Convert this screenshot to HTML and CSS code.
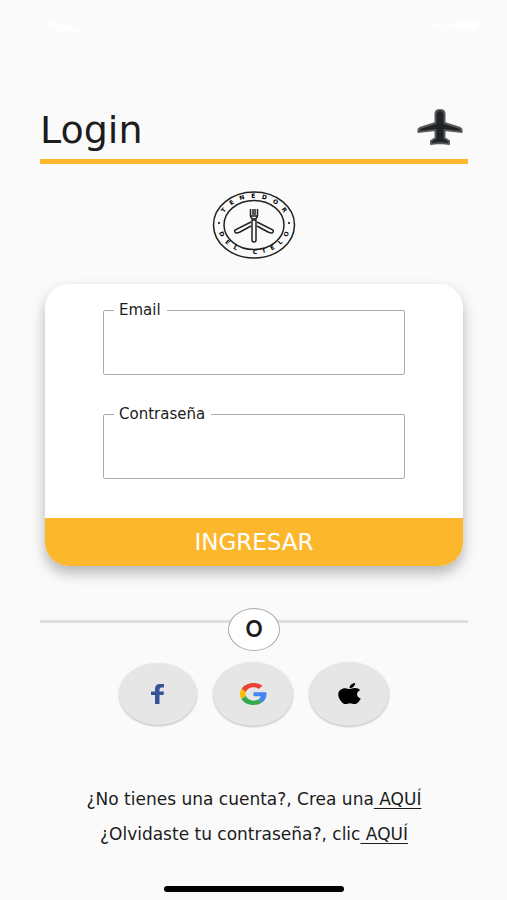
FILE: index.html
```html
<!DOCTYPE html>
<html lang="es">
<head>
    <meta charset="UTF-8">
    <meta name="viewport" content="width=device-width, initial-scale=1.0">
    <title>Tenedor del Cielo - Login</title>
    <link rel="stylesheet" href="styles.css">
</head>
<body>
    <!-- Status bar, white on the light background -->
    <div class="status-bar">
        <svg width="40" height="18" viewBox="0 0 40 18" aria-hidden="true">
            <path d="M3 6L14 11L30 13" fill="none" stroke="#fff" stroke-width="5" stroke-linecap="round"/>
        </svg>
        <svg width="58" height="18" viewBox="0 0 58 18" aria-hidden="true">
            <path d="M2 5h16l-8 9zM20 7h12v5H20z" fill="#fdfdfd"/>
            <rect x="32" y="4" width="24" height="10" rx="4" fill="#fff"/>
        </svg>
    </div>

    <header>
        <h1>Login</h1>
        <svg class="plane" viewBox="0 0 46 38" aria-hidden="true">
            <path d="M18.500 6Q18.500 2 23 2T27.500 6V15L43 20Q45 21 44.500 24L27.500 22V30L32 33V36L23 35L14 36V33L18.500 30V22L1.500 24Q1 21 3 20L18.500 15Z"/>
        </svg>
    </header>

    <main>
        <svg class="logo" viewBox="0 0 84 68" role="img" aria-label="Tenedor del Cielo">
            <defs>
                <path id="arc-top" d="M8.500 34A33.500 27 0 0 1 75.500 34"/>
                <path id="arc-bottom" d="M5 32A37 31 0 0 0 79 32"/>
            </defs>
            <ellipse cx="42" cy="34" rx="40.5" ry="33" class="ring"/>
            <ellipse cx="42" cy="34" rx="30" ry="24.5" class="ring"/>
            <text class="logo-text"><textPath href="#arc-top" startOffset="50%">T   E   N   E   D   O   R</textPath></text>
            <text class="logo-text"><textPath href="#arc-bottom" startOffset="50%">D   E   L        C   I   E   L   O</textPath></text>
            <circle cx="7" cy="32" r="1"/>
            <circle cx="77" cy="32" r="1"/>
            <path class="fork" d="M38.500 18V25Q39 28 42 28T45.500 25V18M41 18V24M43 18V24M39 25H45"/>
            <path class="fork" d="M40 29H44V49Q44 51 42 51T40 49Z"/>
            <path class="fork" d="M39 31L23 39Q22 41 24 42Q26 42 28 41L39 35M45 31L61 39Q62 41 60 42Q58 42 56 41L45 35"/>
        </svg>

        <form class="card">
            <div class="fields">
                <div class="form-group">
                    <label for="email">Email</label>
                    <input type="email" id="email" name="email">
                </div>
                <div class="form-group">
                    <label for="password">Contraseña</label>
                    <input type="password" id="password" name="password">
                </div>
            </div>
            <button type="submit" class="btn">INGRESAR</button>
        </form>

        <div class="divider"><span>O</span></div>

        <div class="social">
            <button type="button" class="social-btn social-small" aria-label="Facebook">
                <svg width="14" height="20" viewBox="0 0 14 20" aria-hidden="true">
                    <path fill="#36539b" d="M4 20V11H0V7.500H4V5Q4 0 9 0H13V3.500H10.500Q8.500 3.500 8.500 5.500V7.500H13L12.500 11H8.500V20Z"/>
                </svg>
            </button>
            <button type="button" class="social-btn" aria-label="Google">
                <svg width="27" height="22" viewBox="0 0 48 48" preserveAspectRatio="none" aria-hidden="true">
                    <path fill="#ea4335" d="M24 9.500c3.540 0 6.710 1.220 9.210 3.600l6.850-6.850C35.900 2.380 30.470 0 24 0 14.620 0 6.510 5.380 2.560 13.220l7.980 6.190C12.430 13.720 17.740 9.500 24 9.500z"/>
                    <path fill="#4285f4" d="M46.980 24.550c0-1.570-.15-3.090-.38-4.550H24v9.020h12.940c-.58 2.960-2.260 5.480-4.780 7.180l7.730 6c4.510-4.180 7.090-10.360 7.090-17.650z"/>
                    <path fill="#fbbc05" d="M10.530 28.590c-.48-1.450-.76-2.990-.76-4.590s.27-3.140.76-4.590l-7.980-6.190C.92 16.460 0 20.120 0 24c0 3.880.92 7.540 2.560 10.780l7.970-6.190z"/>
                    <path fill="#34a853" d="M24 48c6.480 0 11.930-2.130 15.890-5.810l-7.730-6c-2.150 1.450-4.920 2.300-8.160 2.300-6.260 0-11.570-4.220-13.470-9.910l-7.980 6.190C6.510 42.620 14.620 48 24 48z"/>
                </svg>
            </button>
            <button type="button" class="social-btn" aria-label="Apple">
                <svg width="23" height="22" viewBox="0 0 384 470" preserveAspectRatio="none" aria-hidden="true">
                    <path d="M318.700 238.700c-.2-36.700 16.400-64.400 50-84.800-18.800-26.900-47.200-41.700-84.700-44.600-35.500-2.800-74.300 20.700-88.500 20.700-15 0-49.400-19.700-76.400-19.700C63.300 111.200 4 154.800 4 243.500q0 39.300 14.400 81.200c12.800 36.700 59 126.700 107.200 125.200 25.200-.6 43-17.900 75.800-17.900 31.800 0 48.300 17.900 76.400 17.900 48.600-.7 90.400-82.500 102.600-119.300-65.200-30.700-61.700-90-61.700-91.900zM262.100 74.500c27.300-32.400 24.800-61.900 24-72.500-24.100 1.400-52 16.400-67.900 34.900-17.500 19.800-27.800 44.300-25.600 71.900 26.100 2 49.900-11.400 69.500-34.300z"/>
                </svg>
            </button>
        </div>
    </main>

    <footer>
        <p>¿No tienes una cuenta?, Crea una<a href="#registro"> AQUÍ</a></p>
        <p>¿Olvidaste tu contraseña?, clic<a href="#recuperar"> AQUÍ</a></p>
        <div class="home-bar"></div>
    </footer>
</body>
</html>
```
FILE: styles.css
```css
* {
    box-sizing: border-box;
}

body {
    font-family: "DejaVu Sans", Verdana, sans-serif;
    margin: 0;
    padding: 0 39px 0 40px;
    min-height: 100vh;
    background-color: #fafafa;
    color: #1c1c1c;
    display: flex;
    flex-direction: column;
}

.status-bar {
    display: flex;
    justify-content: space-between;
    padding: 17px 0 0 8px;
    margin-right: -13px;
}

.status-bar svg {
    filter: blur(2px);
}

header {
    display: flex;
    justify-content: space-between;
    align-items: center;
    height: 64px;
    margin-top: 65px;
    padding-right: 5px;
    border-bottom: 5px solid #fcb72c;
}

header h1 {
    margin: 0;
    font-size: 38px;
    line-height: 40px;
    font-weight: 400;
}

.plane {
    width: 46px;
    height: 38px;
    margin-bottom: 6px;
    fill: #202225;
    stroke: #55585b;
    stroke-width: 2;
}

main {
    display: flex;
    flex-direction: column;
}

.logo {
    width: 84px;
    height: 68px;
    margin: 27px auto 0;
}

.ring,
.fork {
    fill: none;
    stroke: #222;
    stroke-width: 1.5;
}

.logo-text {
    font-size: 6px;
    font-weight: 700;
    text-anchor: middle;
    white-space: pre;
}

.card {
    margin: 25px 5px 0;
    background-color: #fff;
    border-radius: 24px;
    overflow: hidden;
    box-shadow: 0 7px 14px rgba(0, 0, 0, 0.28);
}

.fields {
    display: flex;
    flex-direction: column;
    gap: 39px;
    padding: 26px 58px 39px;
}

.form-group {
    position: relative;
}

.form-group label {
    position: absolute;
    top: -8px;
    left: 11px;
    padding: 0 6px 0 5px;
    background-color: #fff;
    font-size: 15px;
    line-height: 16px;
}

.form-group input {
    display: block;
    width: 100%;
    height: 65px;
    padding: 10px 16px;
    border: 1px solid #aaa;
    border-radius: 2px;
    background-color: #fff;
    font: inherit;
}

.btn {
    display: block;
    width: 100%;
    height: 48px;
    padding: 0;
    border: none;
    background-color: #fcb72c;
    color: #fff;
    font-family: inherit;
    font-size: 23px;
    cursor: pointer;
}

.divider {
    position: relative;
    display: flex;
    justify-content: center;
    margin-top: 42px;
}

.divider::before {
    content: "";
    position: absolute;
    top: 12px;
    left: 0;
    right: 0;
    height: 3px;
    background-color: #dedede;
}

.divider span {
    position: relative;
    width: 52px;
    height: 43px;
    border: 1px solid #aaa;
    border-radius: 50%;
    background-color: #fff;
    font-family: Inter, sans-serif;
    font-size: 23px;
    font-weight: 600;
    line-height: 41px;
    text-align: center;
}

.social {
    display: flex;
    justify-content: center;
    align-items: center;
    gap: 16px;
    margin-top: 11px;
}

.social-btn {
    display: flex;
    justify-content: center;
    align-items: center;
    width: 80px;
    height: 64px;
    padding: 0;
    border: none;
    border-radius: 50%;
    background-color: #e6e6e6;
    box-shadow: 0 1px 2px rgba(0, 0, 0, 0.25);
    cursor: pointer;
}

.social-small {
    width: 78px;
    height: 62px;
}

footer {
    margin-top: auto;
    padding-bottom: 8px;
    text-align: center;
}

footer p {
    margin: 0 0 11px;
    font-size: 17px;
    line-height: 24px;
}

footer a {
    color: inherit;
    text-underline-offset: 3px;
}

.home-bar {
    width: 180px;
    height: 6px;
    margin: 40px auto 0;
    border-radius: 3px;
    background-color: #000;
}
```
